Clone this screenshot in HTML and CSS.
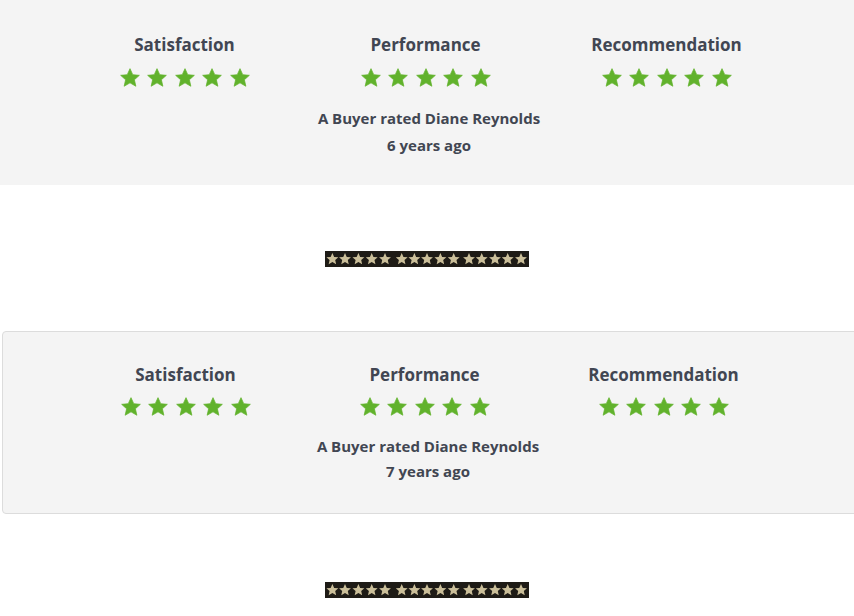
FILE: index.html
```html
<!DOCTYPE html>
<html lang="en">
<head>
  <meta charset="UTF-8">
  <title>Reviews · Diane Reynolds</title>
  <meta name="viewport" content="width=device-width, initial-scale=1.0">
  <link rel="stylesheet" href="styles.css">
</head>
<body>
<svg class="defs" width="0" height="0" aria-hidden="true">
  <symbol id="star" viewBox="0 0 24 24">
    <polygon points="12,1.8 15,8.4 22.2,9.1 16.8,13.9 18.4,21 12,17.3 5.6,21 7.2,13.9 1.8,9.1 9,8.4" stroke-linejoin="round" />
  </symbol>
</svg>

<div class="review review-flat">
  <div class="ratings">
    <div class="rating">
      <h4>Satisfaction</h4>
      <div class="stars"><svg><use href="#star"/></svg><svg><use href="#star"/></svg><svg><use href="#star"/></svg><svg><use href="#star"/></svg><svg><use href="#star"/></svg></div>
    </div>
    <div class="rating">
      <h4>Performance</h4>
      <div class="stars"><svg><use href="#star"/></svg><svg><use href="#star"/></svg><svg><use href="#star"/></svg><svg><use href="#star"/></svg><svg><use href="#star"/></svg></div>
    </div>
    <div class="rating">
      <h4>Recommendation</h4>
      <div class="stars"><svg><use href="#star"/></svg><svg><use href="#star"/></svg><svg><use href="#star"/></svg><svg><use href="#star"/></svg><svg><use href="#star"/></svg></div>
    </div>
  </div>
  <p class="rater">A Buyer rated Diane Reynolds<br>6 years ago</p>
</div>

<div class="divider">
  <svg viewBox="0 0 204 16" width="204" height="16">
    <rect width="204" height="16" fill="#1e1b16" />
    <g fill="#cbbf9a">
      <use href="#star" x="0.4" y="1" width="14" height="14" />
      <use href="#star" x="13" y="1" width="14" height="14" />
      <use href="#star" x="26.4" y="1" width="14" height="14" />
      <use href="#star" x="39.7" y="1" width="14" height="14" />
      <use href="#star" x="53" y="1" width="14" height="14" />
      <use href="#star" x="69.7" y="1" width="14" height="14" />
      <use href="#star" x="82.4" y="1" width="14" height="14" />
      <use href="#star" x="95" y="1" width="14" height="14" />
      <use href="#star" x="108.4" y="1" width="14" height="14" />
      <use href="#star" x="121.7" y="1" width="14" height="14" />
      <use href="#star" x="137" y="1" width="14" height="14" />
      <use href="#star" x="149.7" y="1" width="14" height="14" />
      <use href="#star" x="163" y="1" width="14" height="14" />
      <use href="#star" x="175.7" y="1" width="14" height="14" />
      <use href="#star" x="189" y="1" width="14" height="14" />
    </g>
  </svg>
</div>

<div class="review review-boxed">
  <div class="ratings">
    <div class="rating">
      <h4>Satisfaction</h4>
      <div class="stars"><svg><use href="#star"/></svg><svg><use href="#star"/></svg><svg><use href="#star"/></svg><svg><use href="#star"/></svg><svg><use href="#star"/></svg></div>
    </div>
    <div class="rating">
      <h4>Performance</h4>
      <div class="stars"><svg><use href="#star"/></svg><svg><use href="#star"/></svg><svg><use href="#star"/></svg><svg><use href="#star"/></svg><svg><use href="#star"/></svg></div>
    </div>
    <div class="rating">
      <h4>Recommendation</h4>
      <div class="stars"><svg><use href="#star"/></svg><svg><use href="#star"/></svg><svg><use href="#star"/></svg><svg><use href="#star"/></svg><svg><use href="#star"/></svg></div>
    </div>
  </div>
  <p class="rater">A Buyer rated Diane Reynolds<br>7 years ago</p>
</div>

<div class="divider divider-last">
  <svg viewBox="0 0 204 16" width="204" height="16">
    <rect width="204" height="16" fill="#1e1b16" />
    <g fill="#cbbf9a">
      <use href="#star" x="0.4" y="1" width="14" height="14" />
      <use href="#star" x="13" y="1" width="14" height="14" />
      <use href="#star" x="26.4" y="1" width="14" height="14" />
      <use href="#star" x="39.7" y="1" width="14" height="14" />
      <use href="#star" x="53" y="1" width="14" height="14" />
      <use href="#star" x="69.7" y="1" width="14" height="14" />
      <use href="#star" x="82.4" y="1" width="14" height="14" />
      <use href="#star" x="95" y="1" width="14" height="14" />
      <use href="#star" x="108.4" y="1" width="14" height="14" />
      <use href="#star" x="121.7" y="1" width="14" height="14" />
      <use href="#star" x="137" y="1" width="14" height="14" />
      <use href="#star" x="149.7" y="1" width="14" height="14" />
      <use href="#star" x="163" y="1" width="14" height="14" />
      <use href="#star" x="175.7" y="1" width="14" height="14" />
      <use href="#star" x="189" y="1" width="14" height="14" />
    </g>
  </svg>
</div>
</body>
</html>
```

FILE: styles.css
```css
html, body { overflow: hidden; }
body { margin: 0; font-family: "Open Sans", "Liberation Sans", sans-serif; font-weight: 700; color: #414652; background: #fff; }
.defs { position: absolute; }
.review { background: #f4f4f4; }
.review-flat { padding: 33px 0 26px; }
.review-boxed { margin: 0 -10px 0 2px; padding: 31px 0 29px; border: 1px solid #dcdcdc; border-radius: 4px; }
.ratings { display: grid; grid-template-columns: repeat(3, 241px); margin-left: 64px; }
.review-boxed .ratings { grid-template-columns: repeat(3, 239px); margin-left: 63px; }
.rating { text-align: center; }
.rating h4 { margin: 0; font-size: 17px; line-height: 24px; font-weight: 700; }
.stars { display: flex; justify-content: center; gap: 5.5px; margin-top: 10px; }
.review-boxed .stars { margin-top: 9px; }
.stars svg { width: 22px; height: 22px; fill: #61b22c; stroke: #61b22c; stroke-width: 0.8; }
.rater { width: 730px; margin: 16px 0 0 64px; text-align: center; font-size: 15px; line-height: 27px; }
.review-boxed .rater { margin: 16px 0 0 60px; line-height: 25px; }
.divider { display: flex; justify-content: center; margin: 66px 0 64px; }
.divider svg { display: block; }
.divider-last { margin: 68px 0 0; }
```
